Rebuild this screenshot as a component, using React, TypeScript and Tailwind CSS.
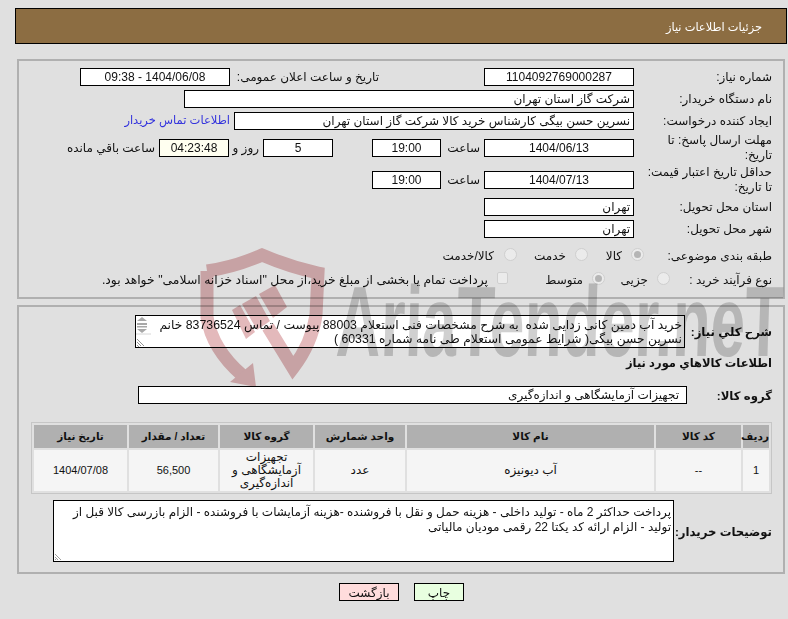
import React from "react";

const Field = ({ w, children, center, bg }: { w: string; children?: React.ReactNode; center?: boolean; bg?: string }) => (
  <div className={`${w} ${center ? "text-center" : "text-right pr-[3px]"} ${bg ?? "bg-white"} relative z-20 h-[18px] shrink-0 border border-black leading-[17px] whitespace-nowrap overflow-hidden`}>
    {children}
  </div>
);

const Label = ({ children, bold, w }: { children: React.ReactNode; bold?: boolean; w?: string }) => (
  <div className={`${w ?? "w-[138px]"} ${bold ? "font-bold text-[11.7px]" : ""} shrink-0 whitespace-nowrap leading-[15px]`}>{children}</div>
);

const Radio = ({ on }: { on?: boolean }) => (
  <span className="mb-1 flex h-[13px] w-[13px] shrink-0 items-center justify-center rounded-full border border-[#cfcfcf] bg-[#ebebeb]">
    {on ? <span className="h-[7px] w-[7px] rounded-full bg-[#b5b5b5]" /> : null}
  </span>
);

const Th = ({ w, children }: { w: string; children: React.ReactNode }) => (
  <th className={`${w} h-[23px] bg-[#b0b0b0] p-0 text-center text-[10.5px] font-bold`}>{children}</th>
);
const Td = ({ children, small }: { children: React.ReactNode; small?: boolean }) => (
  <td className={`${small ? "text-[11px]" : ""} h-[41px] bg-[#f5f5f5] p-0 text-center leading-[13px]`}>{children}</td>
);

export default function App() {
  return (
    <div
      dir="rtl"
      className="relative h-[619px] w-[788px] overflow-hidden bg-[#e0e0e0] pt-2 font-['Liberation_Sans','DejaVu_Sans',sans-serif] text-[12px] text-[#111]"
    >
      <div className="ml-[15px] mr-px flex h-[36px] items-center border border-black bg-[#8c6d42] pr-[24px] pt-1 text-[11.4px] text-white">
        جزئیات اطلاعات نیاز
      </div>

      <section className="ml-[17px] mr-[3px] mt-[15px] h-[240px] border-2 border-[#b0b0b0] pr-[11px] pt-[7px]">
        <div className="flex h-[18px] items-center">
          <Label>شماره نیاز:</Label>
          <Field w="w-[150px]" center>1104092769000287</Field>
          <div className="w-[105px] shrink-0" />
          <div className="w-[149px] shrink-0">تاریخ و ساعت اعلان عمومی:</div>
          <Field w="w-[150px]" center>1404/06/08 - 09:38</Field>
        </div>
        <div className="mt-1 flex h-[18px] items-center">
          <Label>نام دستگاه خریدار:</Label>
          <Field w="w-[450px]">شرکت گاز استان تهران</Field>
        </div>
        <div className="mt-1 flex h-[18px] items-center">
          <Label>ایجاد کننده درخواست:</Label>
          <Field w="w-[400px]">نسرین حسن بیگی کارشناس خرید کالا شرکت گاز استان تهران</Field>
          <span className="mr-1 whitespace-nowrap text-[11.5px] text-[#3333dd]">اطلاعات تماس خریدار</span>
        </div>
        <div className="mt-[5px] flex h-[26px] items-center">
          <Label>مهلت ارسال پاسخ: تا<br />تاریخ:</Label>
          <Field w="w-[150px]" center>1404/06/13</Field>
          <span className="w-[43px] shrink-0 pr-1">ساعت</span>
          <Field w="w-[69px]" center>19:00</Field>
          <div className="w-[39px] shrink-0" />
          <Field w="w-[70px]" center>5</Field>
          <span className="w-[34px] shrink-0 pr-1">روز و</span>
          <Field w="w-[70px]" center bg="bg-[#fffff0]">04:23:48</Field>
          <span className="mr-1 whitespace-nowrap">ساعت باقي مانده</span>
        </div>
        <div className="mt-[6px] flex h-[26px] items-center">
          <Label>حداقل تاریخ اعتبار قیمت:<br />تا تاریخ:</Label>
          <Field w="w-[150px]" center>1404/07/13</Field>
          <span className="w-[43px] shrink-0 pr-1">ساعت</span>
          <Field w="w-[69px]" center>19:00</Field>
        </div>
        <div className="mt-[5px] flex h-[18px] items-center">
          <Label>استان محل تحویل:</Label>
          <Field w="w-[150px]">تهران</Field>
        </div>
        <div className="mt-1 flex h-[18px] items-center">
          <Label>شهر محل تحویل:</Label>
          <Field w="w-[150px]">تهران</Field>
        </div>
        <div className="mt-[10px] flex h-[16px] items-center">
          <Label w="w-[128px]">طبقه بندی موضوعی:</Label>
          <Radio on />
          <span className="mr-[9px] w-[34px] shrink-0">کالا</span>
          <Radio />
          <span className="mr-[9px] w-[49px] shrink-0">خدمت</span>
          <Radio />
          <span className="mr-[10px] whitespace-nowrap">کالا/خدمت</span>
        </div>
        <div className="mt-[8px] flex h-[16px] items-center">
          <Label w="w-[102px]">نوع فرآیند خرید :</Label>
          <Radio />
          <span className="mr-[9px] w-[43px] shrink-0">جزیی</span>
          <Radio on />
          <span className="mr-[9px] w-[75px] shrink-0">متوسط</span>
          <span className="mb-1 h-[12px] w-[11px] shrink-0 rounded-[2px] border border-[#cfcfcf] bg-[#ebebeb]" />
          <span className="mr-[9px] whitespace-nowrap text-[12.4px]">پرداخت تمام یا بخشی از مبلغ خرید،از محل "اسناد خزانه اسلامی" خواهد بود.</span>
        </div>
      </section>

      <section className="ml-[17px] mr-[3px] mt-[6px] h-[269px] border-2 border-[#b0b0b0] pr-[11px] pt-[8px]">
        <div className="flex h-[33px] items-center">
          <Label bold w="w-[87px]">شرح کلي نیاز:</Label>
          <div className="relative h-[33px] w-[550px] shrink-0 whitespace-nowrap border border-black bg-white pr-0.5 pt-px text-[12.3px] leading-[14px]">
            <div className="pt-px">خرید آب دمین کانی زدایی شده&nbsp; به شرح مشخصات فنی استعلام 88003 پیوست / تماس 83736524 خانم</div>
            <div>نسرین حسن بیگی( شرایط عمومی استعلام طی نامه شماره 60331 )</div>
            <svg className="absolute bottom-0 left-0 h-[31px] w-[15px]" viewBox="0 0 15 31">
              <path d="M6 1l5 4H1zM1 7h10v2H1zM1 10h10v1.500H1zM1 13h10l-5 4z" fill="#a8a8a8" />
              <path d="M0 18h15" stroke="#d6d6d6" />
              <path d="M1 23l7 7M1 26l4 4M1 29l2 2" stroke="#666" strokeWidth="0.7" />
            </svg>
          </div>
        </div>
        <div className="mt-[8px] h-[14px] text-[11.5px] font-bold leading-[14px]">اطلاعات کالاهاي مورد نیاز</div>
        <div className="mt-[16px] flex h-[18px] items-center">
          <Label bold w="w-[85px]">گروه کالا:</Label>
          <Field w="w-[549px]"><span className="pr-1">تجهیزات آزمایشگاهی و اندازه‌گیری</span></Field>
        </div>
        <table className="relative z-20 mt-[18px] w-[741px] table-fixed border-separate border-spacing-[2px] border border-[#c6c6c6] bg-[#e0e0e0]">
          <thead>
            <tr>
              <Th w="w-[26px]">ردیف</Th>
              <Th w="w-[85px]">کد کالا</Th>
              <Th w="w-[247px]">نام کالا</Th>
              <Th w="w-[90px]">واحد شمارش</Th>
              <Th w="w-[93px]">گروه کالا</Th>
              <Th w="w-[89px]">تعداد / مقدار</Th>
              <Th w="w-[93px]">تاریخ نیاز</Th>
            </tr>
          </thead>
          <tbody>
            <tr>
              <Td small>1</Td>
              <Td small>--</Td>
              <Td>آب دیونیزه</Td>
              <Td>عدد</Td>
              <Td>تجهیزات آزمایشگاهی و اندازه‌گیری</Td>
              <Td small>56,500</Td>
              <Td small>1404/07/08</Td>
            </tr>
          </tbody>
        </table>
        <div className="mt-[6px] flex h-[62px] items-center">
          <Label bold w="w-[98px]">توضیحات خریدار:</Label>
          <div className="relative h-[62px] w-[621px] shrink-0 whitespace-nowrap border border-black bg-white pr-0.5 pt-1 leading-[15px]">
            <div>پرداخت حداکثر 2 ماه - تولید داخلی - هزینه حمل و نقل با فروشنده -هزینه آزمایشات با فروشنده - الزام بازرسی کالا قبل از</div>
            <div>تولید - الزام ارائه کد یکتا 22 رقمی مودیان مالیاتی</div>
            <svg className="absolute bottom-0 left-0 h-[8px] w-[8px]" viewBox="0 0 8 8">
              <path d="M1 1l6 6M1 4l3 3M1 6l1 1" stroke="#777" strokeWidth="0.7" />
            </svg>
          </div>
        </div>
      </section>

      <div className="mr-[324px] mt-[9px] flex gap-[15px]">
        <button className="h-[18px] w-[50px] border border-black bg-[#e8ffe0] p-0 pt-px text-center leading-[16px]">چاپ</button>
        <button className="h-[18px] w-[60px] border border-black bg-[#ffdcdc] p-0 pt-px text-center leading-[16px]">بازگشت</button>
      </div>

      <div dir="ltr" className="pointer-events-none absolute left-0 top-0 z-10 h-[619px] w-[788px] mix-blend-multiply">
        <svg className="absolute left-[190px] top-[245px] h-[160px] w-[150px]" viewBox="0 0 150 160">
          <g fill="none" stroke="#e3b9bb" strokeWidth="13">
            <path d="M17 26Q45 22 72 10Q100 22 128 28L126 70Q122 98 103 123L78 82" />
            <path d="M17 26L17 72Q22 104 52 130" />
          </g>
          <path d="M40 137L66 142L63 118Z" fill="#e3b9bb" />
          <g fill="#e3b9bb">
            <path d="M42 65L50 60L65 87L56 94Z" />
            <path d="M52 59L66 51L80 76L67 85Z" />
            <path d="M69 49L85 40L97 62L83 73Z" />
          </g>
        </svg>
        <div className="absolute left-[338px] top-[271px] origin-top-left scale-x-[0.62] -skew-x-3 whitespace-nowrap font-['Liberation_Sans',sans-serif] text-[100px] font-bold leading-[100px] text-[#d0d0d0]">
          AriaTender.neT
        </div>
      </div>
    </div>
  );
}
